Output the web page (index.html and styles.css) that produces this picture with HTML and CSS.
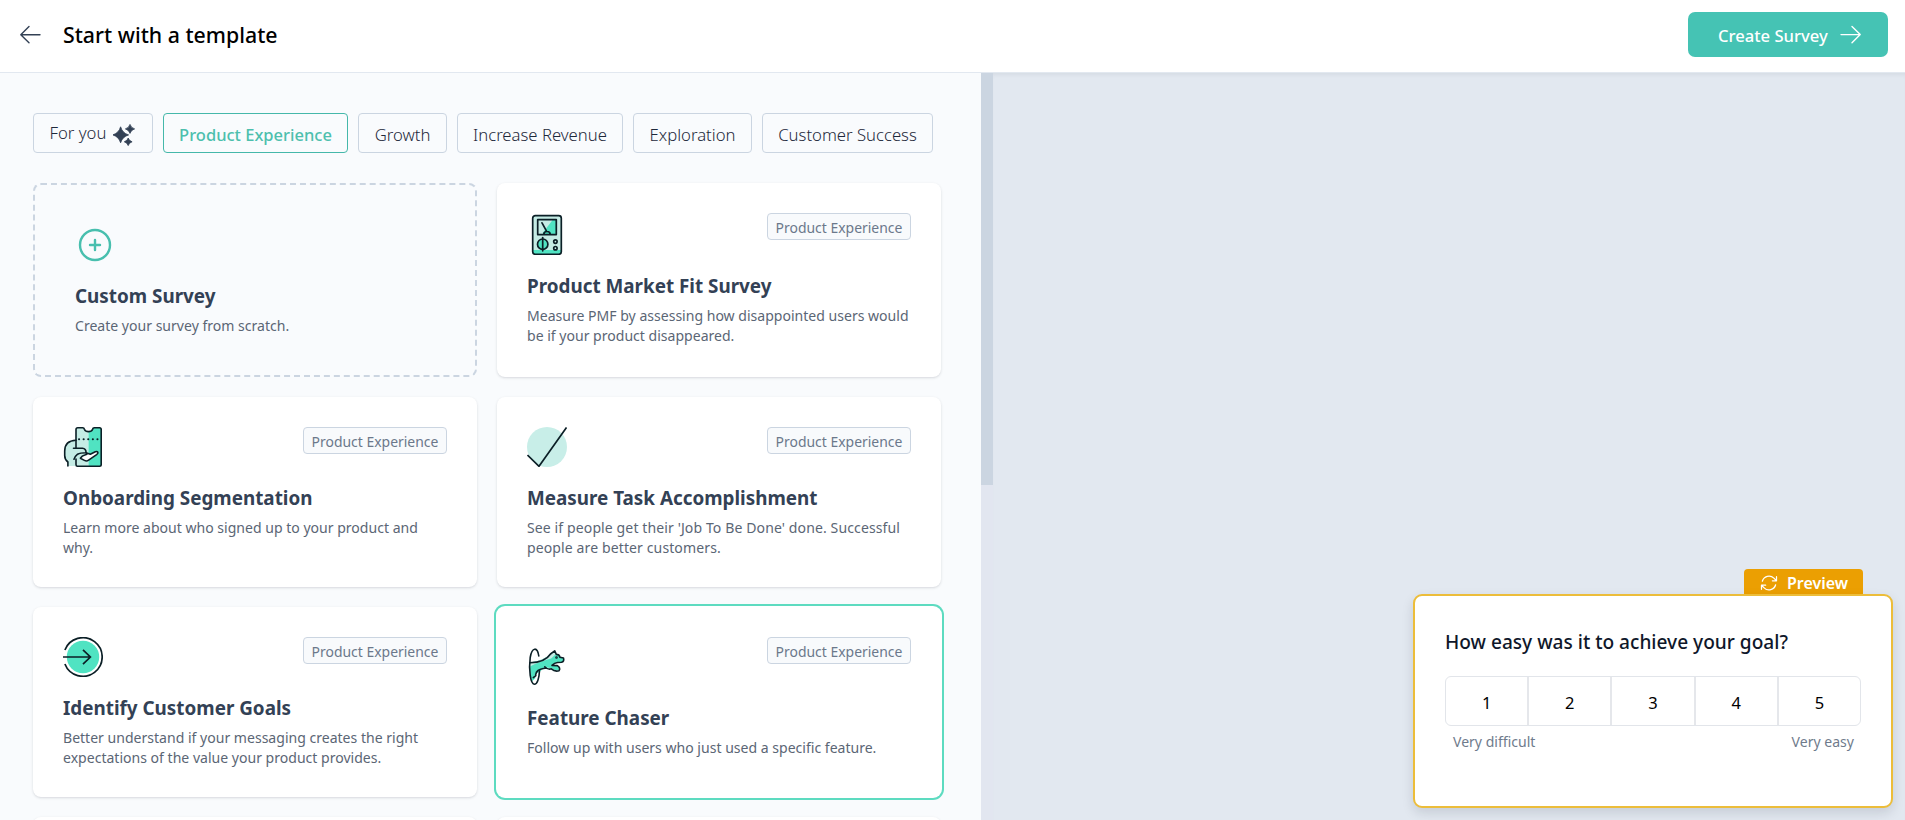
FILE: index.html
```html
<!DOCTYPE html>
<html lang="en">
<head>
<meta charset="utf-8">
<title>Start with a template</title>
<link rel="stylesheet" href="styles.css">
</head>
<body>
<div class="app">
  <header class="topbar">
    <svg class="back" viewBox="0 0 25 25" fill="none" stroke="#334155" stroke-width="1.4" stroke-linecap="round" stroke-linejoin="round"><path d="M11 4.5 2.8 12.7 11 20.8M3 12.7h19"/></svg>
    <h1 class="page-title">Start with a template</h1>
    <button class="create">Create Survey
      <svg class="create-icon" viewBox="0 0 25 25" fill="none" stroke="currentColor" stroke-width="1.4" stroke-linecap="round" stroke-linejoin="round"><path d="M14 4.5l8.2 8.1-8.2 8.1M22 12.6H3"/></svg>
    </button>
  </header>
  <div class="body">
    <main class="templates">
      <nav class="tabs">
        <button class="tab tab-you">For you
          <svg class="sparkles" viewBox="0 0 22 22" fill="#334155"><path d="M7.6 2.8Q9.4 9.1 15.6 10.9 9.4 12.7 7.6 18.8 5.8 12.7-.2 10.9 5.8 9.1 7.6 2.8ZM17 .4Q18 3.9 21.6 4.9 18 5.9 17 9.4 16 5.9 12.4 4.9 16 3.9 17 .4ZM15.2 14Q16 16.9 19.1 17.8 16 18.7 15.2 21.6 14.4 18.7 11.3 17.8 14.4 16.9 15.2 14Z" stroke="#334155" stroke-width=".8" stroke-linejoin="round"/></svg>
        </button>
        <button class="tab tab-px active">Product Experience</button>
        <button class="tab tab-growth">Growth</button>
        <button class="tab tab-revenue">Increase Revenue</button>
        <button class="tab tab-explore">Exploration</button>
        <button class="tab tab-success">Customer Success</button>
      </nav>
      <div class="grid">
        <section class="card custom">
          <svg class="icon" viewBox="0 0 40 40" fill="none" stroke="#48bfae" stroke-width="2.4" stroke-linecap="round"><circle cx="20" cy="20" r="15"/><path d="M20 15v10M15 20h10"/></svg>
          <h2>Custom Survey</h2>
          <p>Create your survey from scratch.</p>
        </section>
        <section class="card first">
          <div class="card-top">
            <svg class="icon meter" viewBox="0 0 40 42" fill="none" stroke="#0b1f26" stroke-width="1.7" stroke-linecap="round" stroke-linejoin="round">
              <rect x="5.7" y="2.7" width="28.6" height="38.6" rx="2.6" fill="#c5ece5" stroke="none"/>
              <path d="M6 37h28v2q0 2-2 2H8q-2 0-2-2z" fill="#50e3c2" stroke="none"/>
              <rect x="5.7" y="2.7" width="28.6" height="38.6" rx="2.6"/>
              <path d="M29.3 6.6v15H17.5L10.7 17 26 6.6z" fill="#50e3c2" stroke="none"/>
              <path d="M10.7 6.6h15.3L14.5 21.6h-3.8z" fill="#c5ece5" stroke="none"/>
              <path d="M10.7 6.6h18.6v15H10.7zM15 9.8l4.4 8M16.8 21.3q0-2.8 3.2-2.8t3.2 2.8"/>
              <circle cx="15.7" cy="31.2" r="5.2" fill="#50e3c2"/><path d="M15.7 24.6v13.2"/>
              <circle cx="28.4" cy="28.6" r="1.7"/><circle cx="28.4" cy="35.2" r="1.7"/>
            </svg>
            <span class="tag">Product Experience</span>
          </div>
          <h2>Product Market Fit Survey</h2>
          <p>Measure PMF by assessing how disappointed users would<br>be if your product disappeared.</p>
        </section>
        <section class="card">
          <div class="card-top">
            <svg class="icon" viewBox="0 0 40 40" fill="none" stroke="#0b1f26" stroke-width="1.6" stroke-linecap="round" stroke-linejoin="round">
              <path d="M13 13.2C4.5 13.5 1.7 18 1.7 24v4.5q0 4 3.2 6.500V39H13z" fill="#c5ece5" stroke="none"/>
              <path d="M15 .8h6.5q0 4 4 4V39H14.5q-1.5 0-1.5-1.500V2.800Q13 .8 15 .8z" fill="#c5ece5" stroke="none"/>
              <path d="M25.5 4.6q3.5 0 4-3.800H37q1.300 0 1.300 1.300v35.600q0 1.500-1.500 1.500H25.500z" fill="#50e3c2" stroke="none"/>
              <path d="M13 21V2.500Q13 .8 14.700.8h5q1.300 0 1.700 1.500 1.100 2.300 4.100 2.300t4.100-2.300q.4-1.500 1.700-1.500h5.200q1.700 0 1.700 1.700v35q0 1.700-1.700 1.700h-22Q13 39.200 13 37.500V32"/>
              <path d="M13 13.200C4.500 13.500 1.700 18 1.700 24v4.500q0 4 3.200 6.500v4"/>
              <path d="M10.500 21.200h9q3.500.3 3.600 4.500-6 0-8.500 1.500-2.500 2-3.600 5" fill="#c5ece5"/>
              <path d="M23.100 25.700l4.200 1.500 5-2.500q2-.6 2.600.7.400 1-1.300 2.300l-8 5.500q-2 1.400-4.200.2l-4-2.200q1.600-2.400 4.400-3.200l2-.8z" fill="#fff"/>
              <path d="M16 12.300h20" stroke-width="2" stroke-dasharray=".1 4.500"/>
            </svg>
            <span class="tag">Product Experience</span>
          </div>
          <h2>Onboarding Segmentation</h2>
          <p>Learn more about who signed up to your product and<br>why.</p>
        </section>
        <section class="card">
          <div class="card-top">
            <svg class="icon" viewBox="0 0 40 40" fill="none"><circle cx="20" cy="20" r="20" fill="#c8eee8"/><path d="M.5 28 12 39.300 39.500.5" stroke="#0b1f26" stroke-width="1.700"/></svg>
            <span class="tag">Product Experience</span>
          </div>
          <h2>Measure Task Accomplishment</h2>
          <p class="wide">See if people get their 'Job To Be Done' done. Successful<br>people are better customers.</p>
        </section>
        <section class="card">
          <div class="card-top">
            <svg class="icon" viewBox="0 0 40 40" fill="none"><circle cx="20" cy="20" r="16.200" fill="#50e3c2"/><path d="M1.900 13a19.300 19.300 0 1 1 0 14M0 20h27.500M20 12.800l7.400 7.200-7.400 7.200" stroke="#0b1f26" stroke-width="1.700"/></svg>
            <span class="tag">Product Experience</span>
          </div>
          <h2>Identify Customer Goals</h2>
          <p>Better understand if your messaging creates the right<br>expectations of the value your product provides.</p>
        </section>
        <section class="card selected">
          <div class="card-top">
            <svg class="icon tall" viewBox="0 0 40 50" fill="none" stroke="#0b1f26" stroke-width="1.600" stroke-linecap="round" stroke-linejoin="round">
              <path d="M3 25.500Q16 24.500 27.600 14l2 3.600 2.400 1q1 2 4.500 2.800 1 3-2 3.600l-4 .3q-2 .6-5 2.700l5 .4q3 2 1.600 4.600-4 1.200-7.500-1.800l-5-.6q-4 .6-6.500 3.900-4 1.700-4.500 3.500l-.3 3.300-3.200 3Q2.600 38 3 25.500z" fill="#50e3c2" stroke="none"/>
              <path d="M3 25.500Q16 24.500 27.600 14l1.500 3-5 4.500Q12 24.500 3 29.500z" fill="#c5ece5" stroke="none"/>
              <path d="M11.800 19C10.500 9.800 5 9.500 3.200 20.500 1.600 33 3.500 47 7.200 47.300c3 .2 5-6 5.300-13.500"/>
              <path d="M3 25.700Q18 25.500 23.500 17l4.200-3.200 1.600 3.600q3 0 3.700 2.800l3.500.8q1 3.600-2 4.300l-4 .2q-3 .3-5.500 2.900l5.300.2q3.600 2.200 1.800 5.100-4.200 1.300-7.800-1.900-2 .8-4.500-.4l-2-1.600M19.500 31q-7 1-8.500 2.500-2 1.300-2.300 4l.1 1.200-2.500 1.900"/>
              <circle cx="29.500" cy="20.500" r=".5"/>
            </svg>
            <span class="tag">Product Experience</span>
          </div>
          <h2>Feature Chaser</h2>
          <p>Follow up with users who just used a specific feature.</p>
        </section>
        <section class="card"></section>
        <section class="card"></section>
      </div>
    </main>
    <div class="scrollbar"><div class="thumb"></div></div>
    <aside class="stage">
      <div class="preview">
        <div class="preview-tab">
          <svg class="refresh" viewBox="0 0 24 24" fill="none" stroke="currentColor" stroke-width="1.500" stroke-linecap="round" stroke-linejoin="round"><path d="M16.023 9.348h4.992v-.001M2.985 19.644v-4.992m0 0h4.992m-4.993 0 3.181 3.183a8.250 8.250 0 0 0 13.803-3.700M4.031 9.865a8.250 8.250 0 0 1 13.803-3.700l3.181 3.182m0-4.991v4.990"/></svg>
          Preview
        </div>
        <div class="survey">
          <h3>How easy was it to achieve your goal?</h3>
          <div class="scale"><span>1</span><span>2</span><span>3</span><span>4</span><span>5</span></div>
          <div class="labels"><span>Very difficult</span><span>Very easy</span></div>
        </div>
      </div>
    </aside>
  </div>
</div>
</body>
</html>
```
FILE: styles.css
```css
* { box-sizing: border-box; }
body { margin: 0; font-family: "Noto Sans", "Open Sans", sans-serif; color: #334155; }
h1, h2, h3, p { margin: 0; }
svg { display: block; flex: none; }
button { font-family: inherit; margin: 0; }

.app { width: 1905px; height: 820px; display: flex; flex-direction: column; overflow: hidden; }
.topbar { flex: none; height: 73px; display: flex; align-items: center; padding: 0 17px 3px 18px; background: #fff; border-bottom: 1px solid #e2e8f0; }
.back { width: 25px; height: 25px; }
.page-title { margin-left: 20px; font-size: 21.3px; font-weight: 500; line-height: 30px; color: #000; }
.create { margin-left: auto; width: 200px; height: 45px; display: flex; align-items: center; gap: 10px; padding: 2px 0 0 30px; border: 0; border-radius: 7px; background: #45c3b4; color: #fff; font-size: 16.6px; font-weight: 500; white-space: nowrap; }
.create-icon { width: 25px; height: 25px; margin-top: -3px; }

.body { flex: 1; min-height: 0; display: flex; }
.templates { width: 981px; padding: 40px 40px 0 33px; background: #f9fbfd; overflow: hidden; }
.tabs { display: flex; gap: 10px; margin-bottom: 30px; }
.tab { height: 40px; display: flex; align-items: center; justify-content: center; gap: 6px; padding: 2px 0 0; border: 1px solid #cbd5e1; border-radius: 4px; background: transparent; color: #1e293b; font-size: 16.7px; font-weight: 300; white-space: nowrap; }
.tab-you { width: 120px; gap: 7px; padding: 0 1px 1px 0; }
.tab-px { width: 185px; }
.tab-growth { width: 89px; }
.tab-revenue { width: 166px; }
.tab-explore { width: 119px; }
.tab-success { width: 171px; }
.tab.active { border-color: #45b8aa; color: #4dbfad; font-size: 16.5px; font-weight: 500; }
.sparkles { width: 22px; height: 22px; margin-top: 4px; }

.grid { display: grid; grid-template-columns: 444px 444px; grid-template-rows: 194px; grid-auto-rows: 190px; gap: 20px; }
.card { padding: 30px 30px 0; border-radius: 8px; background: #fff; box-shadow: 0 1px 3px rgba(15, 23, 42, .12), 0 1px 2px -1px rgba(15, 23, 42, .1); }
.custom { padding: 40px 40px 0; border: 2px dashed #cbd5e1; background: transparent; box-shadow: none; }
.selected { box-shadow: 0 0 0 1px #fff, 0 0 0 3px #5ddbc0; }
.card-top { display: flex; justify-content: space-between; align-items: flex-start; }
.icon { width: 40px; height: 40px; }
.meter { height: 42px; }
.tall { height: 50px; }
.tag { width: 144px; height: 27px; padding-top: 1px; border: 1px solid #cbd5e1; border-radius: 4px; background: #f8fafc; color: #6b788b; font-size: 13.95px; font-weight: 400; line-height: 26px; text-align: center; white-space: nowrap; }
.card h2 { margin-top: 16px; font-size: 18.85px; font-weight: 700; line-height: 30px; color: #334155; white-space: nowrap; }
.card p { margin-top: 5px; font-size: 14.05px; font-weight: 400; line-height: 20px; color: #5b6675; white-space: nowrap; }
.card p.wide { letter-spacing: .1px; }

.scrollbar { width: 12px; background: #e2e6f0; }
.thumb { height: 412px; background: #cbd5e1; }

.stage { flex: 1; display: flex; flex-direction: column; align-items: flex-end; justify-content: flex-end; padding: 0 12px 12px 0; background: #e2e8f0; box-shadow: inset 0 4px 5px -3px rgba(15, 23, 42, .08); }
.preview { width: 480px; display: flex; flex-direction: column; align-items: flex-end; }
.preview-tab { width: 119px; height: 25px; margin-right: 30px; display: flex; align-items: center; gap: 8px; padding: 3px 0 0 15px; border-radius: 4px 4px 0 0; background: #eb9f02; color: #fff; font-size: 16px; font-weight: 600; line-height: 22px; }
.refresh { width: 20px; height: 20px; }
.survey { width: 480px; height: 214px; padding: 30px; border: 2px solid #ecbd3a; border-radius: 9px; background: #fff; box-shadow: 0 5px 12px rgba(15, 23, 42, .13); }
.survey h3 { font-size: 19.1px; font-weight: 500; line-height: 32px; color: #0f172a; white-space: nowrap; }
.scale { height: 50px; margin-top: 18px; display: flex; border: 1px solid #e2e5ea; border-radius: 6px; }
.scale span { flex: 1; padding-top: 2px; font-size: 16.5px; line-height: 48px; text-align: center; color: #000; font-weight: 400; }
.scale span + span { border-left: 2px solid #e5e7eb; }
.labels { display: flex; justify-content: space-between; padding: 6px 7px 0 8px; font-size: 14.05px; font-weight: 400; line-height: 20px; color: #6f7b8c; }
```
